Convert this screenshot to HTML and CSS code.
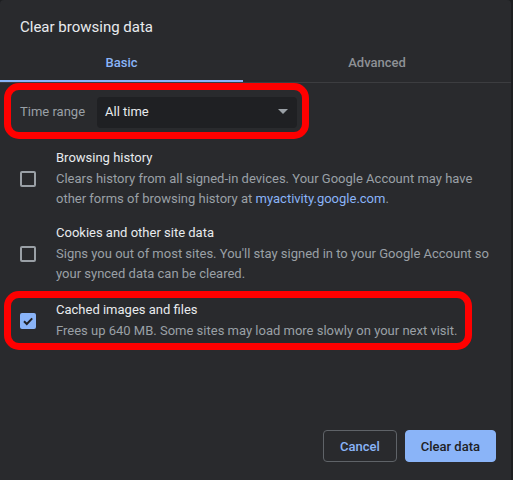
FILE: index.html
```html
<!DOCTYPE html>
<html>
<head>
<meta charset="utf-8">
<link rel="stylesheet" href="styles.css">
</head>
<body>
<div class="dialog">
  <div class="title">Clear browsing data</div>
  <div class="tabs">
    <div class="tab active">Basic</div>
    <div class="tab">Advanced</div>
  </div>
  <div class="range-row">
    <span class="range-label">Time range</span>
    <div class="select"><span>All time</span><span class="arrow"></span></div>
    <div class="mark mark-range"></div>
  </div>
  <div class="rows">
    <div class="row">
      <span class="checkbox"></span>
      <div class="text">
        <div class="label">Browsing history</div>
        <div class="sub">Clears history from all signed-in devices. Your Google Account may have other forms of browsing history at <a class="link">myactivity.google.com</a>.</div>
      </div>
    </div>
    <div class="row">
      <span class="checkbox"></span>
      <div class="text">
        <div class="label">Cookies and other site data</div>
        <div class="sub">Signs you out of most sites. You'll stay signed in to your Google Account so your synced data can be cleared.</div>
      </div>
    </div>
    <div class="row">
      <span class="checkbox checked"><svg viewBox="0 0 16 16" width="16" height="16"><path d="M4 8.2 L6.8 11 L12.2 5.4" fill="none" stroke="#202124" stroke-width="2"/></svg></span>
      <div class="text">
        <div class="label">Cached images and files</div>
        <div class="sub">Frees up 640 MB. Some sites may load more slowly on your next visit.</div>
      </div>
      <div class="mark mark-cache"></div>
    </div>
  </div>
  <div class="footer">
    <button class="btn cancel">Cancel</button>
    <button class="btn primary">Clear data</button>
  </div>
</div>
</body>
</html>
```

FILE: styles.css
```css
html, body {
  margin: 0;
  padding: 0;
  background: #1d1e20;
}
body {
  font-family: Roboto, "Noto Sans", Arial, sans-serif;
  font-size: 13px;
  line-height: 20px;
  color: #e8eaed;
}
.dialog {
  width: 511px;
  height: 480px;
  box-sizing: border-box;
  background: #292a2d;
  border-radius: 4px 4px 0 0;
  display: flex;
  flex-direction: column;
}
.title {
  padding: 17px 20px 0;
  font-size: 15px;
  line-height: 20px;
  color: #e8eaed;
}
.tabs {
  display: grid;
  grid-template-columns: 243px 1fr;
  border-bottom: 1px solid #3c3d40;
}
.tab {
  height: 45px;
  box-sizing: border-box;
  padding-top: 16px;
  text-align: center;
  font-weight: 500;
  color: #8e9196;
}
.tab.active {
  color: #8ab4f8;
  box-shadow: inset 0 -2px 0 #8ab4f8;
}
.range-row {
  position: relative;
  height: 58px;
  display: flex;
  align-items: center;
  padding-left: 20px;
}
.range-label {
  width: 77px;
  color: #9aa0a6;
}
.select {
  width: 200px;
  height: 31px;
  box-sizing: border-box;
  background: #1f2023;
  border-radius: 4px;
  display: flex;
  align-items: center;
  justify-content: space-between;
  padding: 0 9px 0 8px;
  color: #e8eaed;
}
.arrow {
  width: 0;
  height: 0;
  border-left: 5px solid transparent;
  border-right: 5px solid transparent;
  border-top: 5px solid #9aa0a6;
  margin-top: -1px;
}
.row {
  position: relative;
  display: flex;
  align-items: center;
  min-height: 45px;
  padding: 7px 16px 7px 20px;
}
.checkbox {
  flex: none;
  width: 16px;
  height: 16px;
  box-sizing: border-box;
  border: 2px solid #9aa0a6;
  border-radius: 2px;
  margin-right: 20px;
}
.checkbox.checked {
  border: none;
  background: #8ab4f8;
}
.checkbox svg {
  display: block;
}
.text {
  flex: 1;
}
.label {
  color: #e8eaed;
}
.sub {
  margin-top: 1px;
  color: #9aa0a6;
}
.link {
  color: #8ab4f8;
  text-decoration: none;
}
.mark {
  position: absolute;
  box-sizing: border-box;
  border: 7px solid #ff0000;
  border-radius: 15px;
  pointer-events: none;
}
.mark-range {
  left: 4px;
  top: 0;
  width: 305px;
  height: 56px;
}
.mark-cache {
  left: 4px;
  top: 0;
  width: 468px;
  height: 59px;
}
.footer {
  margin-top: auto;
  display: flex;
  justify-content: flex-end;
  gap: 8px;
  padding: 0 15px 18px 0;
}
.btn {
  height: 32px;
  padding: 0 15px;
  border-radius: 4px;
  font-family: inherit;
  font-size: 13px;
  font-weight: 500;
}
.cancel {
  padding: 0 16px;
  background: transparent;
  border: 1px solid #5f6368;
  color: #8ab4f8;
}
.primary {
  background: #8ab4f8;
  border: 1px solid #8ab4f8;
  color: #202124;
}
```
